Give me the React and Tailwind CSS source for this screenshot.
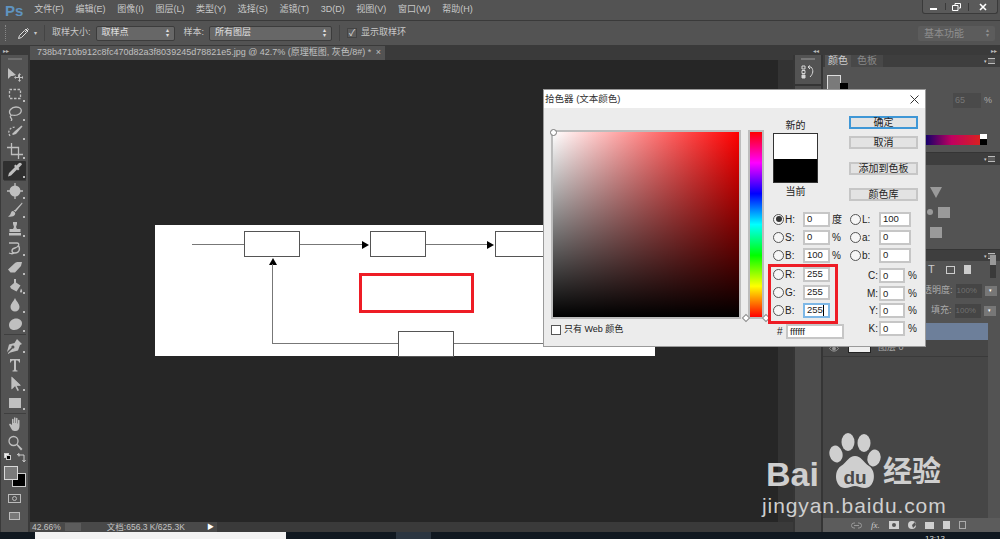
import React from "react";

const F = '[font-family:"Liberation_Sans","Noto_Sans_CJK_SC",sans-serif]';
const L = '[font-family:"Liberation_Sans",sans-serif]';
const menu = ["文件(F)", "编辑(E)", "图像(I)", "图层(L)", "类型(Y)", "选择(S)", "滤镜(T)", "3D(D)", "视图(V)", "窗口(W)", "帮助(H)"];

function Tool({ f, s, dash, active, nomark }) {
  return (
    <div className={`relative flex h-[19px] w-[23px] shrink-0 items-center justify-center ${active ? "rounded-[1px] bg-[#2f2f2f]" : ""}`}>
      <svg width="16" height="16" viewBox="0 0 16 16">
        {f && <path d={f} fill="#bfbfbf" />}
        {s && <path d={s} fill="none" stroke="#bfbfbf" strokeWidth="1.3" strokeDasharray={dash} />}
      </svg>
      {!nomark && <span className="absolute bottom-[2px] right-[1px] h-[2px] w-[2px] bg-[#bbb]" />}
    </div>
  );
}

const Sep = () => <span className="my-[0.67px] h-px w-[22px] shrink-0 bg-[#3f3f3f]" />;

const t1 = [
  { f: "M1 1v11l3-3 1.500 0L9 8zM11 8l1.500-2 1.500 2h-1v2h2V9l2 1.500L15 12v-1h-2v2h1l-1.500 2-1.500-2h1v-2H9v1l-2-1.500L9 9v1h2V8z", nomark: true },
  { s: "M2.500 3.500h11v9h-11z", dash: "2.500 1.500" },
  { s: "M4 10C0 6 5 2 9 2s6 2 5 5-6 4-9 3M5 10c-2 1-2 2-1 3s1 2 0 3" },
  { f: "M14.500 1.500L8 7l-3 3 1 1 3-1 6.500-7.500z", s: "M3 12C0 7 3 3 9 3", dash: "2 1.500" },
  { s: "M4.500 0v11.500H16M0 4.500h11.500V16", },
];
const t2 = [
  { f: "M8 2.500a5.500 5.500 0 100 11 5.500 5.500 0 000-11z", s: "M8 0v3M8 13v3M0 8h3M13 8h3" },
  { f: "M15 0.500L8 8l-1.500 0 2 2L15.500 1.500zM6 9c-2 0-2 2-2.500 3S2 14 1 14.500c3 .5 6 0 7-2 .5-1 0-2-.5-2.500z" },
  { f: "M6 1h4v2l-1 3 1 2h3.500v3h-11V8H6l1-2-1-3zM2 12h12v2.500H2z" },
  { s: "M2 3h8c3 0 2 4-2 5s-4 5 0 5 6-4 3-8M2 13c2 1 4 1 6 0" },
  { f: "M1 10.500L8 4c1-1 2-1 3-1h4l-1 4-6 6.500H3.500z" },
  { f: "M7 1h2v3.500l4.500 3-4 6-5.500-3-1-2 4-3.500zM14 10.500c1 1.500 1.500 2.500 1 3.500s-2 .5-2-.5z" },
  { f: "M8 1c-1 3-4.500 5.500-4.500 9a4.500 4.500 0 009 0C12.500 6.500 9 4 8 1z" },
  { f: "M2 9c0-4 4-6.500 7-6.500S15 4 15 7.500 11 14 7.500 14 2 12 2 9z" },
];
const t3 = [
  { f: "M10 1l5 5-2 1-2 5.500-7.500 2L1 16v-1l4.500-4.500a1.500 1.500 0 10-1-1L0 14l2-7.500L7.500 5z" },
  { f: "M3 2h10v3.500h-1c0-1-.5-2-2-2H9v8.500c0 1 .5 1.500 1.500 1.500v1h-5v-1c1 0 1.500-.5 1.500-1.500V3.500H6c-1.500 0-2 1-2 2H3z", nomark: true },
  { f: "M5 1v12l3-3 2.500 5 1.500-.8L9.500 9.500H14z", s: "M5 2v10l3-3h4z" },
  { f: "M2 3h12v10H2z" },
];
const t4 = [
  { f: "M2 8.500l1-1 2 1.500V3.500c0-1 1.500-1 1.500 0V7h.5V2c0-1 1.500-1 1.500 0v5h.5V2.500c0-1 1.500-1 1.500 0V7.500h.5v-3c0-1 1.500-1 1.500 0V10c0 3-1.500 5-4 5H7.500c-1.500 0-2.500-1-3-2z", nomark: true },
  { s: "M6.500 1.500a4.500 4.500 0 100 9 4.500 4.500 0 000-9z", f: "M9.500 10l1-1 5 5-1.500 1.500z", nomark: true },
];

function Field({ v, w = "w-[27px]", blue }) {
  return (
    <div className={`flex h-[15px] ${w} items-center border-2 ${blue ? "border-[#7db7e6]" : "border-[#c6c6c6]"} bg-white pl-[2px] text-[9.500px] leading-none text-[#222]`}>
      {v}
      {blue && <span className="h-[11px] w-px bg-black" />}
    </div>
  );
}

function Radio({ on }) {
  return (
    <span className="flex h-[11px] w-[11px] shrink-0 items-center justify-center rounded-full border border-[#555] bg-[#f6f6f6]">
      {on && <span className="h-[6px] w-[6px] rounded-full bg-[#333]" />}
    </span>
  );
}

function Row({ label, v, unit, on, blue }) {
  return (
    <div className="flex h-[18px] items-center text-[10px] text-[#222]">
      <Radio on={on} />
      <span className="ml-[1px] w-[18px]">{label}</span>
      <Field v={v} blue={blue} />
      <span className="ml-[2px]">{unit}</span>
    </div>
  );
}

function Btn({ children, primary }) {
  return (
    <div className={`flex h-[13px] w-[69px] items-center justify-center border-2 bg-[#e3e3e3] text-[10px] leading-none text-[#222] ${primary ? "border-[#3f97d6]" : "border-[#c6c6c6]"}`}>
      {children}
    </div>
  );
}

function Dialog() {
  return (
    <div className={`absolute left-[543px] top-[89px] h-[258px] w-[383px] border border-[#9a9a9a] bg-[#ececec] ${F}`}>
      <div className="flex h-[18px] items-center justify-between bg-white pl-[1px] pr-[5px] text-[9.500px] text-[#333]">
        <span>拾色器 (文本颜色)</span>
        <svg width="11" height="11" viewBox="0 0 11 11" stroke="#333" strokeWidth="1"><path d="M1.500 1.500l8 8M9.500 1.500l-8 8" /></svg>
      </div>
      <div className="relative flex pl-[7px] pt-[22px]">
        <div className="relative h-[189px] w-[190px] border-2 border-[#bcbcbc] bg-[linear-gradient(to_bottom,transparent,#000),linear-gradient(to_right,#fff,#f00)]">
          <span className="absolute -left-[3px] -top-[3px] h-[7px] w-[7px] rounded-full border border-[#777] bg-white" />
        </div>
        <div className="relative ml-[7px] h-[189px] w-[16px] border-2 border-[#bcbcbc] bg-[linear-gradient(to_bottom,#f00,#f0f,#00f,#0ff,#0f0,#ff0,#f00)]">
          <span className="absolute -bottom-[4px] -left-[7px] h-[6px] w-[6px] rotate-45 border border-[#888] bg-white" />
          <span className="absolute -bottom-[4px] -right-[7px] h-[6px] w-[6px] rotate-45 border border-[#888] bg-white" />
        </div>
        <div className="absolute left-[229px] top-[11px] flex w-[45px] flex-col items-center text-[10px] text-[#222]">
          <span className="h-[13px] leading-[13px]">新的</span>
          <div className="mt-px flex h-[50px] w-[45px] flex-col border border-[#333]">
            <div className="h-[25px] bg-white" />
            <div className="flex-1 bg-black" />
          </div>
          <span className="mt-[2px] leading-[13px]">当前</span>
        </div>
        <div className="absolute left-[305px] top-[8px] flex flex-col">
          <Btn primary>确定</Btn>
          <div className="mt-[7px]"><Btn>取消</Btn></div>
          <div className="mt-[13px]"><Btn>添加到色板</Btn></div>
          <div className="mt-[13px]"><Btn>颜色库</Btn></div>
        </div>
        <div className="absolute left-[229px] top-[102px] flex flex-col">
          <Row label="H:" v="0" unit="度" on />
          <Row label="S:" v="0" unit="%" />
          <Row label="B:" v="100" unit="%" />
          <div className="h-px" />
          <Row label="R:" v="255" />
          <Row label="G:" v="255" />
          <Row label="B:" v="255" blue />
        </div>
        <div className="absolute left-[306px] top-[102px] flex flex-col">
          {[["L:", "100"], ["a:", "0"], ["b:", "0"]].map(([l, v]) => (
            <div key={l} className="flex h-[18px] items-center text-[10px] text-[#222]">
              <Radio />
              <span className="ml-[1px] w-[17px]">{l}</span>
              <Field v={v} w="w-[32px]" />
            </div>
          ))}
        </div>
        <div className="absolute left-[305px] top-[159px] flex flex-col">
          {["C:", "M:", "Y:", "K:"].map((l) => (
            <div key={l} className="flex h-[17.500px] items-center text-[10px] text-[#222]">
              <span className="w-[30px] pr-[1px] text-right">{l}</span>
              <Field v="0" w="w-[26px]" />
              <span className="ml-[3px]">%</span>
            </div>
          ))}
        </div>
        <div className="absolute left-[233px] top-[216px] flex items-center text-[10px] text-[#222]">
          <span className="w-[9px]">#</span>
          <Field v="ffffff" w="w-[58px]" />
        </div>
        <div className="absolute left-[7px] top-[215px] flex items-center text-[9px] text-[#222]">
          <span className="mr-[3px] h-[10px] w-[10px] border border-[#555] bg-white" />
          只有 Web 颜色
        </div>
      </div>
      <div className="absolute left-[224px] top-[174px] h-[60px] w-[70px] border-[3px] border-[#ee1c25]" />
    </div>
  );
}

function Diagram() {
  const box = "absolute h-[26px] w-[56px] border border-[#555] bg-white";
  const line = "absolute bg-[#777]";
  return (
    <div className="absolute left-[155px] top-[225px] h-[131px] w-[500px] bg-white">
      <div className={`${line} left-[37px] top-[19px] h-px w-[53px]`} />
      <div className={`${box} left-[89px] top-[6px]`} />
      <div className={`${line} left-[145px] top-[19px] h-px w-[65px]`} />
      <div className="absolute left-[207px] top-[16px] h-0 w-0 border-y-[4px] border-l-[7px] border-y-transparent border-l-black" />
      <div className={`${box} left-[215px] top-[6px]`} />
      <div className={`${line} left-[271px] top-[19px] h-px w-[65px]`} />
      <div className="absolute left-[332px] top-[16px] h-0 w-0 border-y-[4px] border-l-[7px] border-y-transparent border-l-black" />
      <div className={`${box} left-[340px] top-[6px]`} />
      <div className="absolute left-[114px] top-[33px] h-0 w-0 border-x-[4px] border-b-[7px] border-x-transparent border-b-black" />
      <div className={`${line} left-[117px] top-[39px] h-[80px] w-px`} />
      <div className={`${line} left-[117px] top-[118px] h-px w-[350px]`} />
      <div className={`${box} left-[243px] top-[106px] h-[25px]`} />
      <div className="absolute left-[204px] top-[48px] h-[40px] w-[115px] border-[3px] border-[#ee1c25]" />
    </div>
  );
}

const MenuIcon = () => (
  <span className="absolute right-[5px] top-[3px] flex items-center gap-px">
    <span className="text-[5px] leading-none text-[#ccc]">▾</span>
    <span className="h-[6px] w-[7px] border-y border-[#bbb] bg-[linear-gradient(#5a5a5a_40%,#bbb_40%,#bbb_60%,#5a5a5a_60%)]" />
  </span>
);

function RightPanel() {
  return (
    <div className={`flex w-[207px] shrink-0 flex-col bg-[#353535] ${F} text-[10px] text-[#cfcfcf]`}>
      <div className="flex h-[9px] shrink-0 items-center bg-[#3a3a3a] pl-[20px] pr-[3px] text-[6px] leading-none text-[#bbb]">
        <span>◂◂</span><span className="ml-auto">▸▸</span>
      </div>
      <div className="flex min-h-0 flex-1 pl-[2px]">
        <div className="flex w-[26px] shrink-0 flex-col gap-[2px]">
          <div className="flex h-[29px] flex-col items-center bg-[#535353]">
            <span className="mt-[3px] h-[2px] w-[14px] bg-[#777]" />
            <svg className="mt-[5px]" width="14" height="14" viewBox="0 0 14 14" fill="none" stroke="#d8d8d8"><path d="M1 1h3v3H1zM1 5.500h3v3H1z" /><path d="M1 10h3v3H1z" fill="#d8d8d8" /><path d="M7 2h3c3 3 2 7-1 10M9 .5L7 2l2 2" /></svg>
          </div>
          <div className="flex-1 bg-[#4d4d4d]">
            <span className="mx-auto mt-[3px] block h-[2px] w-[14px] bg-[#777]" />
          </div>
        </div>
        <div className="ml-[2px] flex min-w-0 flex-1 flex-col gap-px">
          <div className="relative h-[97px] shrink-0 bg-[#535353]">
            <div className="flex h-[12px] bg-[#3e3e3e] pl-[2px]">
              <span className="bg-[#535353] px-[3px] text-[10px] leading-[12px]">颜色</span>
              <span className="bg-[#484848] px-[6px] text-[10px] leading-[12px] text-[#888]">色板</span>
            </div>
            <MenuIcon />
            <div className="absolute left-[4px] top-[20px] h-[16px] w-[14px] border border-[#ddd] bg-[#7a7a7a]" />
            <div className="absolute left-[17px] top-[28px] h-[9px] w-[8px] bg-black" />
            <div className="absolute left-[130px] top-[38px] flex items-center gap-[3px] text-[9px] text-[#aaa]">
              <span className="h-[15px] w-[28px] bg-[#4a4a4a] pl-[2px] leading-[15px] text-[#777]">65</span>%
            </div>
            <div className="absolute left-[100px] top-[80px] h-[10px] w-[57px] bg-[linear-gradient(to_right,#00006b,#c00060,#d82020)]" />
            <div className="absolute left-[157px] top-[79px] h-[5px] w-[7px] bg-white" />
            <div className="absolute left-[157px] top-[84px] h-[6px] w-[7px] bg-black" />
          </div>
          <div className="relative h-[96px] shrink-0 bg-[#535353]">
            <div className="h-[12px] bg-[#3e3e3e]" />
            <MenuIcon />
            <svg className="absolute left-[100px] top-[30px]" width="30" height="56" viewBox="0 0 30 56" fill="#9a9a9a">
              <path d="M7 4h12l-6 11z" />
              <circle cx="7" cy="29" r="3" />
              <path d="M15 24h12v11H15zM7 44h12v11H7z" />
            </svg>
          </div>
          <div className="relative min-h-0 flex-1 bg-[#535353]">
            <div className="h-[11px] bg-[#3e3e3e]" />
            <MenuIcon />
            <span className="absolute left-[105px] top-[14px] text-[11px] leading-none text-[#ccc]">T</span>
            <span className="absolute left-[123px] top-[16px] h-[8px] w-[9px] border border-[#ccc]" />
            <span className="absolute left-[141px] top-[15px] h-[9px] w-[7px] bg-[#ccc]" />
            <span className="absolute left-[167px] top-[5px] h-[23px] w-[6px] bg-[#3a3a3a]" />
            <span className="absolute left-[167px] top-[5px] h-[10px] w-[6px] bg-[#999]" />
            <div className="absolute left-[100px] top-[34px] flex items-center gap-[3px] whitespace-nowrap text-[9px] text-[#aaa]">
              <span>透明度:</span>
              <span className="h-[14px] w-[26px] bg-[#454545] pl-[1px] text-[8px] leading-[14px] text-[#707070]">100%</span>
              <span className="flex h-[10px] w-[12px] items-center justify-center bg-[#777] text-[5px] text-white">▾</span>
            </div>
            <div className="absolute left-[108px] top-[54px] flex items-center gap-[3px] whitespace-nowrap text-[9px] text-[#aaa]">
              <span>填充:</span>
              <span className="h-[14px] w-[26px] bg-[#454545] pl-[1px] text-[8px] leading-[14px] text-[#707070]">100%</span>
              <span className="flex h-[10px] w-[12px] items-center justify-center bg-[#777] text-[5px] text-white">▾</span>
            </div>
            <div className="absolute bottom-[14px] left-0 right-[12px] top-[73px] bg-[#464646]">
              <div className="h-[17px] bg-[#6d7f9a]" />
              <div className="flex h-[17px] items-center border-b border-[#3a3a3a] pl-[6px] text-[#aaa]">
                <svg width="10" height="7" viewBox="0 0 10 7" fill="none" stroke="#999"><path d="M.5 3.500C3 0 7 0 9.500 3.500 7 7 3 7 .5 3.500z" /><circle cx="5" cy="3.500" r="1.500" fill="#999" /></svg>
                <span className="ml-[9px] h-[10px] w-[23px] border border-[#222] bg-[#eee]" />
                <span className="ml-[7px] text-[9px]">图层 0</span>
              </div>
            </div>
            <div className="absolute inset-x-0 bottom-0 flex h-[14px] items-center gap-[9px] bg-[#5c5c5c] pl-[28px] text-[9px] text-[#ccc]">
              <svg width="11" height="7" viewBox="0 0 11 7" fill="none" stroke="#999"><path d="M4 1H3a2.500 2.500 0 000 5h1M7 1h1a2.500 2.500 0 010 5H7M3 3.500h5" /></svg>
              <span className="italic leading-none [font-family:'Liberation_Serif',serif]">fx.</span>
              <svg width="10" height="8" viewBox="0 0 10 8"><path d="M0 0h10v8H0z" fill="#d0d0d0" /><circle cx="5" cy="4" r="2" fill="#555" /></svg>
              <svg width="8" height="8" viewBox="0 0 8 8"><circle cx="4" cy="4" r="4" fill="#d0d0d0" /><path d="M4 4l3-3 1 3-3 3z" fill="#555" /></svg>
              <span className="h-[7px] w-[9px] bg-[#d0d0d0]" />
              <span className="h-[8px] w-[7px] bg-[#d0d0d0]" />
              <span className="h-[8px] w-[7px] border border-[#aaa]" />
            </div>
          </div>
        </div>
      </div>
    </div>
  );
}

function Watermark() {
  return (
    <div className="pointer-events-none absolute left-[760px] top-[430px] text-[#cfcfcf]">
      <div className={`absolute left-[6px] top-[27px] text-[34px] font-bold leading-none ${L}`}>Bai</div>
      <svg className="absolute left-[68px] top-0" width="56" height="60" viewBox="0 0 56 60" fill="#cfcfcf">
        <ellipse cx="20" cy="12" rx="6.500" ry="9" />
        <ellipse cx="36" cy="13" rx="6.500" ry="9" />
        <ellipse cx="8" cy="24" rx="6.500" ry="8.500" transform="rotate(-15 8 24)" />
        <ellipse cx="46" cy="28" rx="6.500" ry="8.500" transform="rotate(15 46 28)" />
        <path d="M27 26c6 0 8 6 14 10 8 5 6 22-4 22-4 0-7-2-10-2s-6 2-10 2C7 58 5 41 13 36c6-4 8-10 14-10z" />
      </svg>
      <div className={`absolute left-[80px] top-[38px] w-[30px] text-center text-[19px] font-bold leading-none text-[#4a4a4a] ${L}`}>du</div>
      <div className={`absolute left-[123px] top-[28px] whitespace-nowrap text-[29px] font-bold leading-none ${F}`}>经验</div>
      <div className={`absolute left-[2px] top-[65px] whitespace-nowrap text-[21px] leading-none tracking-[0.9px] ${L}`}>jingyan.baidu.com</div>
    </div>
  );
}

const UpDown = () => <span className="text-[6px] leading-[5px]">▴<br />▾</span>;

export default function App() {
  return (
    <div className={`relative flex h-[539px] w-[1000px] flex-col overflow-hidden bg-[#535353] ${F}`}>
      <div className="relative flex h-[21px] shrink-0 items-center border-b border-[#3a3a3a] bg-[#535353] text-[9px] text-[#c8c8c8]">
        <span className={`ml-[5px] mr-[11px] text-[15px] font-bold leading-none text-[#5f93c0] ${L}`}>Ps</span>
        <div className="flex gap-[11.700px]">
          {menu.map((m) => <span key={m} className="whitespace-nowrap">{m}</span>)}
        </div>
        <div className="absolute right-[2px] top-0 flex h-[14px] w-[76px] items-center rounded-b-[3px] border border-t-0 border-[#3a3a3a] bg-[#5a5a5a]">
          <span className="flex flex-1 justify-center border-r border-[#3a3a3a]"><span className="mt-[5px] h-[2px] w-[7px] bg-white" /></span>
          <span className="flex flex-1 justify-center border-r border-[#3a3a3a]"><svg width="9" height="8" viewBox="0 0 9 8" fill="none" stroke="#fff"><path d="M3 2V.5h5.500V5H7M.5 2.500H6V7.500H.5z" /></svg></span>
          <span className="flex flex-[1.3] justify-center"><svg width="8" height="8" viewBox="0 0 8 8" stroke="#fff" strokeWidth="1.6"><path d="M1 1l6 6M7 1L1 7" /></svg></span>
        </div>
      </div>
      <div className="flex h-[25px] shrink-0 items-center border-b border-[#3a3a3a] bg-[#535353] text-[9px] text-[#c8c8c8]">
        <span className="ml-[5px] h-[16px] w-[2px] border-l border-dotted border-[#888]" />
        <svg className="ml-[10px]" width="13" height="13" viewBox="0 0 13 13" fill="none" stroke="#ddd"><path d="M1.500 11.500l1-3 5-5 2 2-5 5zM8 2l3 3M9 3l1.500-1.500 1 1L10 4" /></svg>
        <span className="ml-[4px] mr-[7px] text-[6px]">▾</span>
        <span className="h-[16px] w-px bg-[#444]" />
        <span className="ml-[7px]">取样大小:</span>
        <div className="ml-[5px] flex h-[15px] w-[79px] items-center justify-between rounded-[2px] border border-[#3c3c3c] bg-[#676767] px-[5px] text-[#e0e0e0]">取样点<UpDown /></div>
        <span className="ml-[9px]">样本:</span>
        <div className="ml-[5px] flex h-[15px] w-[123px] items-center justify-between rounded-[2px] border border-[#3c3c3c] bg-[#676767] px-[5px] text-[#e0e0e0]">所有图层<UpDown /></div>
        <span className="ml-[7px] h-[16px] w-px bg-[#444]" />
        <span className="ml-[7px] flex h-[10px] w-[10px] items-center justify-center border border-[#444] bg-[#5d5d5d] text-[9px] leading-none text-[#ddd]">✓</span>
        <span className="ml-[4px]">显示取样环</span>
        <div className="ml-auto mr-[5px] flex h-[15px] w-[77px] items-center justify-between rounded-[2px] bg-[#5c5c5c] px-[6px] text-[10px] text-[#8f8f8f]">基本功能<UpDown /></div>
      </div>
      <div className="flex min-h-0 flex-1">
        <div className="flex w-[30px] shrink-0 flex-col bg-[#3a3a3a] pl-px pr-[2px]">
          <div className="flex h-[9px] shrink-0 items-center pl-[2px] text-[6px] leading-none text-[#bbb]">▸▸</div>
          <div className="flex flex-1 flex-col items-center bg-[#535353] pt-[3px]">
            <span className="mb-[5.500px] h-[2px] w-[14px] shrink-0 bg-[#6f6f6f]" />
            {t1.map((t, i) => <Tool key={i} {...t} />)}
            <Tool active f="M14.500 1.500c-1-1-2-1-3 0L9.500 3.500l-1-1-1.500 1.500 1 1-6 6L1 14.500l3-1 6-6 1 1L12.500 7l-1-1 2-2c1-1 2-1.500 1-2.500z" />
            <Sep />
            {t2.map((t, i) => <Tool key={i} {...t} />)}
            <Sep />
            {t3.map((t, i) => <Tool key={i} {...t} />)}
            <Sep />
            {t4.map((t, i) => <Tool key={i} {...t} />)}
            <div className="relative h-[41px] w-[25px] shrink-0">
              <span className="absolute left-[2px] top-[1px] h-[5px] w-[5px] border border-[#ccc] bg-[#eee]" />
              <span className="absolute left-[4px] top-[3px] h-[5px] w-[5px] border border-[#ccc] bg-black" />
              <svg className="absolute left-[15px] top-[1px]" width="9" height="9" viewBox="0 0 9 9" fill="none" stroke="#ccc"><path d="M1 2h6v6M0 2l2-1.500V3.500M5.500 7L7 9l1.500-2" /></svg>
              <span className="absolute left-[10px] top-[21px] h-[14px] w-[14px] border border-[#ccc] bg-black" />
              <span className="absolute left-[2px] top-[14px] h-[14px] w-[14px] border border-[#d8d8d8] bg-[#7a7a7a]" />
            </div>
            <span className="relative mt-px flex h-[9px] w-[13px] shrink-0 items-center justify-center border border-[#bbb]"><span className="h-[5px] w-[5px] rounded-full border border-[#bbb]" /></span>
            <span className="relative mt-[9px] h-[8px] w-[11px] shrink-0 border border-[#bbb] bg-[#777]" />
          </div>
        </div>
        <div className="flex min-w-0 flex-1 flex-col bg-[#262626]">
          <div className="flex h-[14px] shrink-0 bg-[#3a3a3a]">
            <div className="flex w-[355px] items-center justify-between bg-[#535353] pl-[7px] pr-[4px] text-[9px] text-[#c0c0c0]">
              <span className="whitespace-nowrap">738b4710b912c8fc470d82a3f8039245d78821e5.jpg @ 42.7% (原理框图, 灰色/8#) *</span>
              <span>×</span>
            </div>
          </div>
          <div className="flex-1 bg-[linear-gradient(to_right,#262626_98%,#333_98%)]" />
          <div className="flex h-[10px] shrink-0 items-center bg-[#3a3a3a] text-[8.500px] text-[#c4c4c4]">
            <div className="flex h-full w-[187px] items-center bg-[#494949] pl-[2px] pr-[3px]">
              <span>42.66%</span>
              <span className="ml-[4px] h-[8px] w-[16px] bg-[#5c5c5c]" />
              <span className="ml-[26px] whitespace-nowrap">文档:656.3 K/625.3K</span>
              <span className="ml-auto text-[7px] text-white">▶</span>
            </div>
          </div>
        </div>
        <RightPanel />
      </div>
      <div className="relative flex h-[7px] shrink-0 bg-[#101820]">
        <div className="ml-[35px] h-full w-[251px] bg-[#f2f2f2]" />
        <div className="ml-[110px] h-full w-[35px] bg-[#2b3540]" />
        <span className="absolute right-[55px] top-[3px] text-[8px] leading-none text-[#ddd]">13:13</span>
      </div>
      <Diagram />
      <Dialog />
      <Watermark />
    </div>
  );
}
